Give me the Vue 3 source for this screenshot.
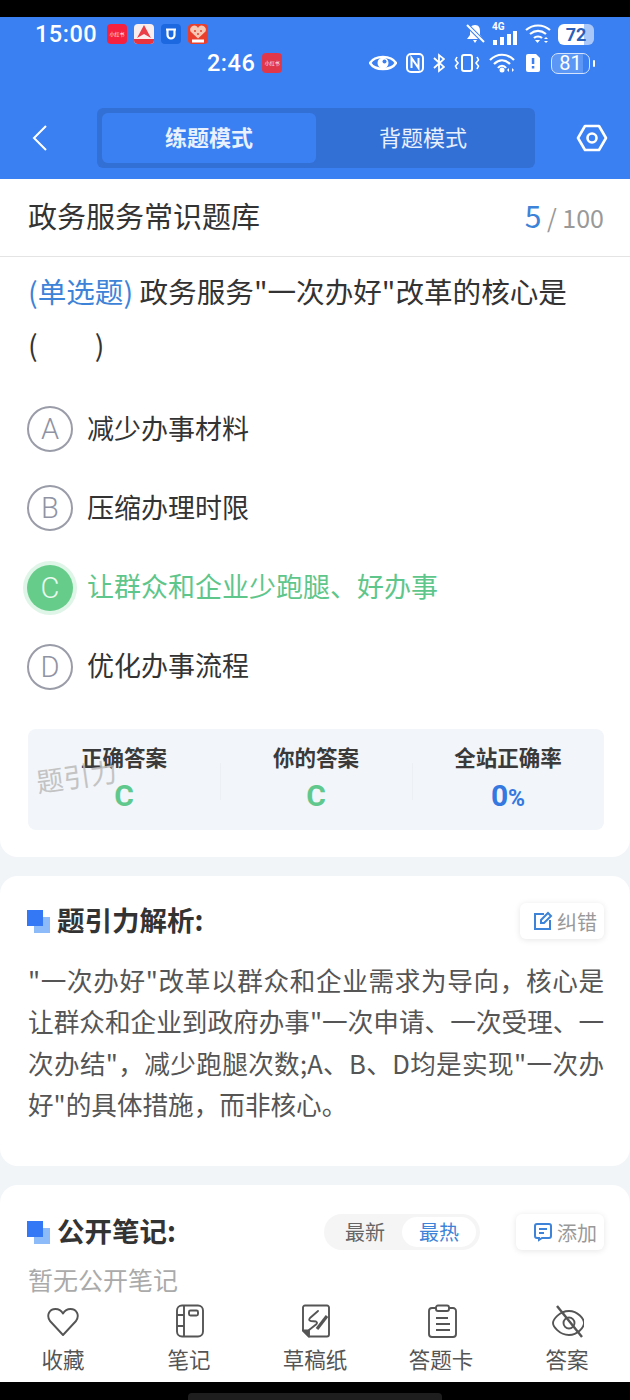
<script setup>
const options = [
  { key: 'A', text: '减少办事材料' },
  { key: 'B', text: '压缩办理时限' },
  { key: 'C', text: '让群众和企业少跑腿、好办事', picked: true },
  { key: 'D', text: '优化办事流程' },
];

const tabs = ['收藏', '笔记', '草稿纸', '答题卡', '答案'];
</script>

<template>
  <div class="page">
    <div class="black-top"></div>

    <header class="head">
      <div class="status">
        <span class="time">15:00</span>
        <span class="app app-red">小红书</span>
        <svg class="app" viewBox="0 0 20 20">
          <rect width="20" height="20" rx="4" fill="#fbeeee" />
          <path d="M10 1 L17 14 L10 10 L3 14 Z" fill="#ea3f48" />
          <path d="M0 15 H20 V16 A4 4 0 0 1 16 20 H4 A4 4 0 0 1 0 16 Z" fill="#e8343f" />
        </svg>
        <svg class="app" viewBox="0 0 20 20">
          <rect width="20" height="20" rx="4" fill="#1b68e0" />
          <path d="M6.500 5 V11 A3.500 3.500 0 0 0 13.500 11 V5 M5 5.500 H15" fill="none" stroke="#fff" stroke-width="2.200" />
        </svg>
        <svg class="app" viewBox="0 0 20 20">
          <rect width="20" height="20" rx="4" fill="#e8402c" />
          <path d="M10 14.500 L2.500 7.500 A3.800 3.800 0 0 1 10 4 A3.800 3.800 0 0 1 17.500 7.500 Z" fill="#f7c9b4" />
          <circle cx="7" cy="7" r="1" fill="#e8402c" />
          <circle cx="13" cy="7" r="1" fill="#e8402c" />
          <circle cx="10" cy="10" r="1" fill="#e8402c" />
          <rect x="4" y="15.500" width="12" height="3" fill="#fff" />
        </svg>
        <span class="spacer"></span>
        <svg width="20" height="20" viewBox="0 0 20 20">
          <path d="M10 1 C6 1 5 4 5 7 V11 L2 15 H18 L15 11 V7 C15 4 14 1 10 1 Z M8 16 H12 L10 19 Z" fill="#fff" />
          <path d="M2 1 L19 18" stroke="#3b80f2" stroke-width="4" />
          <path d="M2 1 L19 18" stroke="#fff" stroke-width="2" />
        </svg>
        <span class="signal">
          <i class="four-g">4G</i>
          <svg width="26" height="14" viewBox="0 0 26 14">
            <rect x="1" y="9" width="4" height="5" fill="#fff" />
            <rect x="8" y="6" width="4" height="8" fill="#fff" />
            <rect x="15" y="3" width="4" height="11" fill="#fff" />
            <rect x="21" y="0" width="4" height="14" fill="#fff" />
          </svg>
        </span>
        <svg width="26" height="20" viewBox="0 0 26 20">
          <path d="M1 6 C8 0 18 0 25 6 M5 10 C10 6 16 6 21 10 M9 14 C11 12 15 12 17 14" fill="none" stroke="#fff" stroke-width="2.200" />
          <path d="M10 16 H15 L12.500 19 Z" fill="#fff" />
          <path d="M19 15 L21 13 L23 15 Z M19 17 L21 19 L23 17 Z" fill="#fff" />
        </svg>
        <span class="batt-a">72</span>
      </div>

      <div class="status second">
        <span class="time time2">2:46</span>
        <span class="app app-dark">小红书</span>
        <span class="spacer"></span>
        <svg width="28" height="18" viewBox="0 0 28 18">
          <path d="M1 9 C6 1 22 1 27 9 C22 17 6 17 1 9 Z" fill="none" stroke="#fff" stroke-width="2.400" />
          <circle cx="14" cy="9" r="5.500" fill="#fff" />
          <circle cx="15.500" cy="7.500" r="2" fill="#3b80f2" />
        </svg>
        <svg width="18" height="20" viewBox="0 0 18 20">
          <rect x="1" y="1" width="16" height="18" rx="4" fill="none" stroke="#fff" stroke-width="2" />
          <path d="M5.500 15 V5 L12.500 15 V5" fill="none" stroke="#fff" stroke-width="2" />
        </svg>
        <svg width="12" height="20" viewBox="0 0 12 20">
          <path d="M1 5 L11 14 L6 18 V2 L11 6 L1 15" fill="none" stroke="#fff" stroke-width="1.800" />
        </svg>
        <svg class="vib" width="26" height="20" viewBox="0 0 26 20">
          <rect x="8" y="2" width="10" height="16" rx="2" fill="none" stroke="#fff" stroke-width="2" />
          <path d="M3 4 L1.500 7 L4 10 L1.500 13 L3 16 M23 4 L24.500 7 L22 10 L24.500 13 L23 16" fill="none" stroke="#fff" stroke-width="1.600" />
        </svg>
        <svg width="27" height="20" viewBox="0 0 27 20">
          <path d="M1 7 C8 0 18 0 25 7 M5 11 C10 6 16 6 21 11 M9 15 C11 12 15 12 17 15" fill="none" stroke="#fff" stroke-width="2.200" />
          <circle cx="13" cy="17" r="2.500" fill="#fff" />
          <path d="M20 15 L18 17 L20 19 Z M23 15 L25 17 L23 19 Z" fill="#fff" />
        </svg>
        <svg width="16" height="20" viewBox="0 0 16 20">
          <path d="M3 1 H11 L15 5 V17 A2 2 0 0 1 13 19 H3 A2 2 0 0 1 1 17 V3 A2 2 0 0 1 3 1 Z" fill="#fff" />
          <rect x="6.800" y="5" width="2.500" height="6" fill="#3b80f2" />
          <rect x="6.800" y="13" width="2.500" height="2.500" fill="#3b80f2" />
        </svg>
        <span class="batt-b">81</span>
      </div>

      <div class="nav">
        <svg class="back" width="16" height="28" viewBox="0 0 16 28">
          <path d="M14 2 L2 14 L14 26" fill="none" stroke="#fff" stroke-width="2" />
        </svg>
        <div class="mode">
          <span class="mode-item on">练题模式</span>
          <span class="mode-item">背题模式</span>
        </div>
        <svg class="gear" width="32" height="28" viewBox="0 0 32 28">
          <path d="M9 2 H23 L30 14 L23 26 H9 L2 14 Z" fill="none" stroke="#fff" stroke-width="2.600" stroke-linejoin="round" />
          <circle cx="16" cy="14" r="4.500" fill="none" stroke="#fff" stroke-width="2.600" />
        </svg>
      </div>
    </header>

    <main class="body">
      <section class="card first">
        <div class="title-row">
          <span class="bank">政务服务常识题库</span>
          <span class="count"><em>5</em> / 100</span>
        </div>

        <div class="question">
          <p class="q-text"><span class="q-type">(单选题)</span> 政务服务"一次办好"改革的核心是<br />(&emsp;&emsp;)</p>

          <div class="options">
            <div v-for="o in options" :key="o.key" class="option" :class="{ picked: o.picked }">
              <span class="bubble">{{ o.key }}</span>
              <span class="o-text">{{ o.text }}</span>
            </div>
          </div>

          <div class="stats">
            <div class="stat">
              <span class="s-label">正确答案</span>
              <span class="s-val green">C</span>
            </div>
            <div class="stat">
              <span class="s-label">你的答案</span>
              <span class="s-val green">C</span>
            </div>
            <div class="stat">
              <span class="s-label">全站正确率</span>
              <span class="s-val blue">0<small>%</small></span>
            </div>
            <span class="watermark">题引力</span>
          </div>
        </div>
      </section>

      <section class="card analysis">
        <div class="sec-head">
          <span class="mark"><i></i></span>
          <h2>题引力解析:</h2>
          <button class="chip">
            <svg width="20" height="20" viewBox="0 0 20 20">
              <path d="M11 3 H2 V18 H17 V9" fill="none" stroke="#3d83d8" stroke-width="2" />
              <path d="M8 12 V9 L15 2 L18 5 L11 12 Z" fill="none" stroke="#3d83d8" stroke-width="2" />
            </svg>
            纠错
          </button>
        </div>
        <p class="a-text">"一次办好"改革以群众和企业需求为导向，核心是让群众和企业到政府办事"一次申请、一次受理、一次办结"，减少跑腿次数;A、B、D均是实现"一次办好"的具体措施，而非核心。</p>
      </section>

      <section class="card notes">
        <div class="sec-head">
          <span class="mark"><i></i></span>
          <h2>公开笔记:</h2>
          <div class="sort">
            <span>最新</span>
            <span class="on">最热</span>
          </div>
          <button class="chip">
            <svg width="20" height="20" viewBox="0 0 20 20">
              <path d="M4 2 H16 A2 2 0 0 1 18 4 V14 A2 2 0 0 1 16 16 H9 L6 18 V16 H4 A2 2 0 0 1 2 14 V4 A2 2 0 0 1 4 2 Z" fill="none" stroke="#3d83d8" stroke-width="2" />
              <path d="M6 7 H14 M6 11 H11" stroke="#3d83d8" stroke-width="2" />
            </svg>
            添加
          </button>
        </div>
        <p class="empty">暂无公开笔记</p>
      </section>
    </main>

    <nav class="tabbar">
      <div v-for="(t, i) in tabs" :key="t" class="tab">
        <svg width="34" height="34" viewBox="0 0 34 34" fill="none" stroke="#555" stroke-width="1.900" stroke-linejoin="round">
          <template v-if="i === 0">
            <path d="M17 31 L4 17 C0 11 3.500 5 9.500 5 C13 5 15.500 7 17 9.500 C18.500 7 21 5 24.500 5 C30.500 5 34 11 30 17 Z" />
          </template>
          <template v-if="i === 1">
            <rect x="5" y="1.500" width="26" height="31" rx="5" />
            <path d="M12 1.500 V32.500 M5 11 H12 M5 22 H12" />
            <rect x="17" y="6.500" width="9" height="5" rx="1.500" />
          </template>
          <template v-if="i === 2">
            <path d="M11 32.500 H29 A2 2 0 0 0 31 30.500 V3.500 A2 2 0 0 0 29 1.500 H7 A2 2 0 0 0 5 3.500 V26.500 Z" />
            <path d="M5 26.500 H11 V32.500 Z" fill="#555" />
            <path d="M20 7 L12 14 Q10 16.500 13 17 L18 17.500 Q20 18.500 18 20.500 L11 26" stroke-linecap="round" />
            <path d="M19 25 L29 12" stroke-width="3.200" />
          </template>
          <template v-if="i === 3">
            <path d="M12 4 H8 A3 3 0 0 0 5 7 V30 A3 3 0 0 0 8 33 H29 A3 3 0 0 0 32 30 V7 A3 3 0 0 0 29 4 H25" />
            <rect x="12" y="1.500" width="13" height="5.500" rx="2" />
            <path d="M12 14 H24 M12 20 H26 M12 26 H26" stroke-width="2.200" />
          </template>
          <template v-if="i === 4">
            <path d="M3 19 C3 16 9 7 19 7 C28 7 34 15 34 19 C34 23 28 31 19 31 C9 31 3 22 3 19 Z" />
            <circle cx="19" cy="19" r="5.500" />
            <path d="M7 2 L32 33" stroke-width="2.400" />
          </template>
        </svg>
        <span>{{ t }}</span>
      </div>
    </nav>

    <div class="black-bottom"><i></i></div>
  </div>
</template>

<style>
body {
  background: #000;
}
</style>

<style scoped>
.page {
  width: 630px;
  height: 1400px;
  display: flex;
  flex-direction: column;
  overflow: hidden;
  background: #f2f5f8;
  font-family: "Noto Sans CJK SC", "Noto Sans", sans-serif;
}
.black-top {
  height: 17px;
  background: #000;
  flex: none;
}
.head {
  height: 162px;
  flex: none;
  background: #3b80f2;
  color: #fff;
  box-sizing: border-box;
  padding-top: 4px;
}
.status {
  height: 26px;
  display: flex;
  align-items: center;
  gap: 7px;
  padding: 0 36px 0 35px;
}
.status.second {
  height: 28px;
  gap: 9px;
  padding: 0 40px 0 207px;
  margin-top: 2px;
}
.time {
  font: 500 23.500px "Roboto", sans-serif;
  margin-right: 3px;
  letter-spacing: 0.5px;
}
.time2 {
  margin-right: -2px;
}
.spacer {
  flex: 1;
}
.app {
  width: 20px;
  height: 20px;
  flex: none;
}
.app-red,
.app-dark {
  border-radius: 4px;
  background: #f5213f;
  color: #fff;
  font-size: 5px;
  line-height: 20px;
  text-align: center;
  white-space: nowrap;
  overflow: hidden;
}
.app-dark {
  background: #e0384a;
}
.signal {
  position: relative;
  width: 26px;
  height: 22px;
  display: flex;
  align-items: flex-end;
}
.four-g {
  position: absolute;
  top: -2px;
  left: 0;
  font: 700 10px "Roboto", sans-serif;
}
.batt-a {
  width: 36px;
  height: 21px;
  border-radius: 6px;
  background: linear-gradient(90deg, #fff 72%, #a9c8f9 72%);
  color: #2c5fb8;
  font: 700 18px/21px "Roboto", sans-serif;
  text-align: center;
}
.batt-b {
  width: 37px;
  height: 19px;
  margin-left: 1px;
  border: 1.500px solid #d5e4fc;
  border-radius: 7px;
  background: linear-gradient(90deg, #5d97f5 84%, transparent 84%);
  font: 400 20px/19px "Roboto", sans-serif;
  text-align: center;
  position: relative;
}
.batt-b::after {
  content: "";
  position: absolute;
  right: -6px;
  top: 6px;
  width: 2px;
  height: 7px;
  background: #fff;
  border-radius: 1px;
}
.nav {
  display: flex;
  align-items: center;
  margin-top: 31px;
  padding-left: 32px;
}
.back {
  flex: none;
}
.mode {
  margin-left: 49px;
  width: 438px;
  height: 60px;
  box-sizing: border-box;
  padding: 5px;
  background: #3370d6;
  border-radius: 6px;
  display: flex;
}
.mode-item {
  width: 214px;
  height: 50px;
  box-sizing: border-box;
  padding-bottom: 4px;
  text-align: center;
  font-size: 22px;
  line-height: 46px;
  color: #e8f0fe;
}
.mode-item.on {
  background: #3b80f2;
  border-radius: 6px;
  font-weight: 700;
  color: #e9f1ff;
}
.gear {
  margin-left: 41px;
  flex: none;
}
.body {
  flex: 1;
  min-height: 0;
  overflow: hidden;
}
.card {
  background: #fff;
  border-radius: 18px;
  margin-bottom: 19px;
}
.card.first {
  border-radius: 0 0 18px 18px;
  height: 678px;
}
.title-row {
  height: 78px;
  box-sizing: border-box;
  border-bottom: 1px solid #e4e4e4;
  padding: 0 26px 6px 28px;
  margin-bottom: 1px;
  display: flex;
  align-items: center;
  justify-content: space-between;
}
.bank {
  font-size: 29px;
  color: #333;
}
.count {
  font-size: 25px;
  color: #999;
}
.count em {
  font-style: normal;
  font-size: 30px;
  color: #3d83d8;
}
.question {
  padding: 6px 26px 0 28px;
}
.q-text {
  margin: 0;
  font-size: 28.600px;
  line-height: 53px;
  color: #333;
}
.q-type {
  color: #3d83d8;
}
.options {
  margin-top: 36px;
  margin-left: -1px;
  display: flex;
  flex-direction: column;
  gap: 33.300px;
}
.option {
  height: 46px;
  display: flex;
  align-items: center;
  gap: 14px;
  font-size: 27px;
  color: #333;
}
.o-text {
  padding-bottom: 4px;
}
.bubble {
  width: 46px;
  height: 46px;
  box-sizing: border-box;
  border: 2px solid #9a9ca8;
  border-radius: 50%;
  display: flex;
  align-items: center;
  justify-content: center;
  font: 300 29px "Roboto", sans-serif;
  color: #8f93a3;
  flex: none;
}
.option.picked {
  color: #5fc68b;
}
.option.picked .bubble {
  border: none;
  background: #66cc8a;
  color: #eafaf0;
  box-shadow: 0 0 0 4px #dff5e7;
}
.stats {
  position: relative;
  margin-top: 39px;
  height: 101px;
  background: #f2f5f9;
  border-radius: 8px;
  display: grid;
  grid-template-columns: repeat(3, 1fr);
  box-sizing: border-box;
}
.stat {
  position: relative;
  display: flex;
  flex-direction: column;
  align-items: center;
  padding-top: 15px;
}
.stat + .stat::before {
  content: "";
  position: absolute;
  left: 0;
  top: 34px;
  width: 1px;
  height: 37px;
  background: #eceff3;
}
.s-label {
  font-size: 21.500px;
  font-weight: 700;
  color: #3a3a3a;
  line-height: 26px;
}
.s-val {
  font: 700 30px/32px "Roboto", sans-serif;
  margin-top: 10px;
}
.s-val small {
  font-size: 23px;
}
.green {
  color: #60c88c;
}
.blue {
  color: #3478e0;
}
.watermark {
  position: absolute;
  left: 8px;
  top: 27px;
  font-size: 27px;
  color: #bbb;
  opacity: 0.85;
  transform: rotate(-8deg);
}
.analysis {
  height: 290px;
  box-sizing: border-box;
  padding: 27px 26px 0 28px;
}
.notes {
  padding: 29px 26px 0 28px;
  margin-bottom: 0;
  min-height: 200px;
  border-radius: 18px 18px 0 0;
}
.sec-head {
  display: flex;
  align-items: center;
  height: 36px;
}
.mark {
  position: relative;
  width: 23px;
  height: 23px;
  margin-left: -1px;
  flex: none;
}
.mark::before {
  content: "";
  position: absolute;
  left: 0;
  top: 0;
  width: 16px;
  height: 16px;
  background: #3578f6;
  z-index: 1;
}
.mark i {
  position: absolute;
  right: 0;
  bottom: 0;
  width: 16px;
  height: 16px;
  background: #8dbaf8;
}
h2 {
  margin: 0 0 0 7px;
  padding-bottom: 4px;
  font-size: 27.500px;
  line-height: 32px;
  font-weight: 700;
  color: #333;
  flex: 1;
}
.chip {
  height: 36px;
  padding: 0 7px 0 13px;
  border: none;
  background: #fff;
  border-radius: 6px;
  box-shadow: 0 1px 6px rgba(0, 0, 0, 0.1);
  display: flex;
  align-items: center;
  gap: 4px;
  font-family: inherit;
  font-size: 20px;
  color: #999;
}
.notes .chip {
  padding-left: 17px;
}
.a-text {
  margin: 20px 0 0;
  font-size: 25.600px;
  line-height: 41.300px;
  color: #555;
  text-align: justify;
}
.sort {
  height: 36px;
  width: 156px;
  border-radius: 18px;
  background: #f5f5f5;
  display: flex;
  align-items: center;
  padding: 3px 4px;
  box-sizing: border-box;
  font-size: 20px;
  color: #666;
  margin-right: 36px;
}
.sort span {
  flex: 1;
  text-align: center;
  line-height: 30px;
}
.sort .on {
  background: #fff;
  border-radius: 15px;
  color: #3d83d8;
}
.empty {
  margin: 14px 0 0;
  font-size: 25px;
  line-height: 30px;
  color: #aaa;
}
.tabbar {
  flex: none;
  height: 86px;
  background: #fff;
  display: grid;
  grid-template-columns: repeat(5, 1fr);
}
.tab {
  display: flex;
  flex-direction: column;
  align-items: center;
  font-size: 21.500px;
  color: #555;
  line-height: 28px;
  padding-top: 8px;
  gap: 7px;
}
.black-bottom {
  height: 18px;
  flex: none;
  background: #000;
  position: relative;
}
.black-bottom i {
  position: absolute;
  left: 188px;
  top: 11px;
  width: 254px;
  height: 7px;
  border-radius: 4px 4px 0 0;
  background: #1e1e1e;
}
</style>
